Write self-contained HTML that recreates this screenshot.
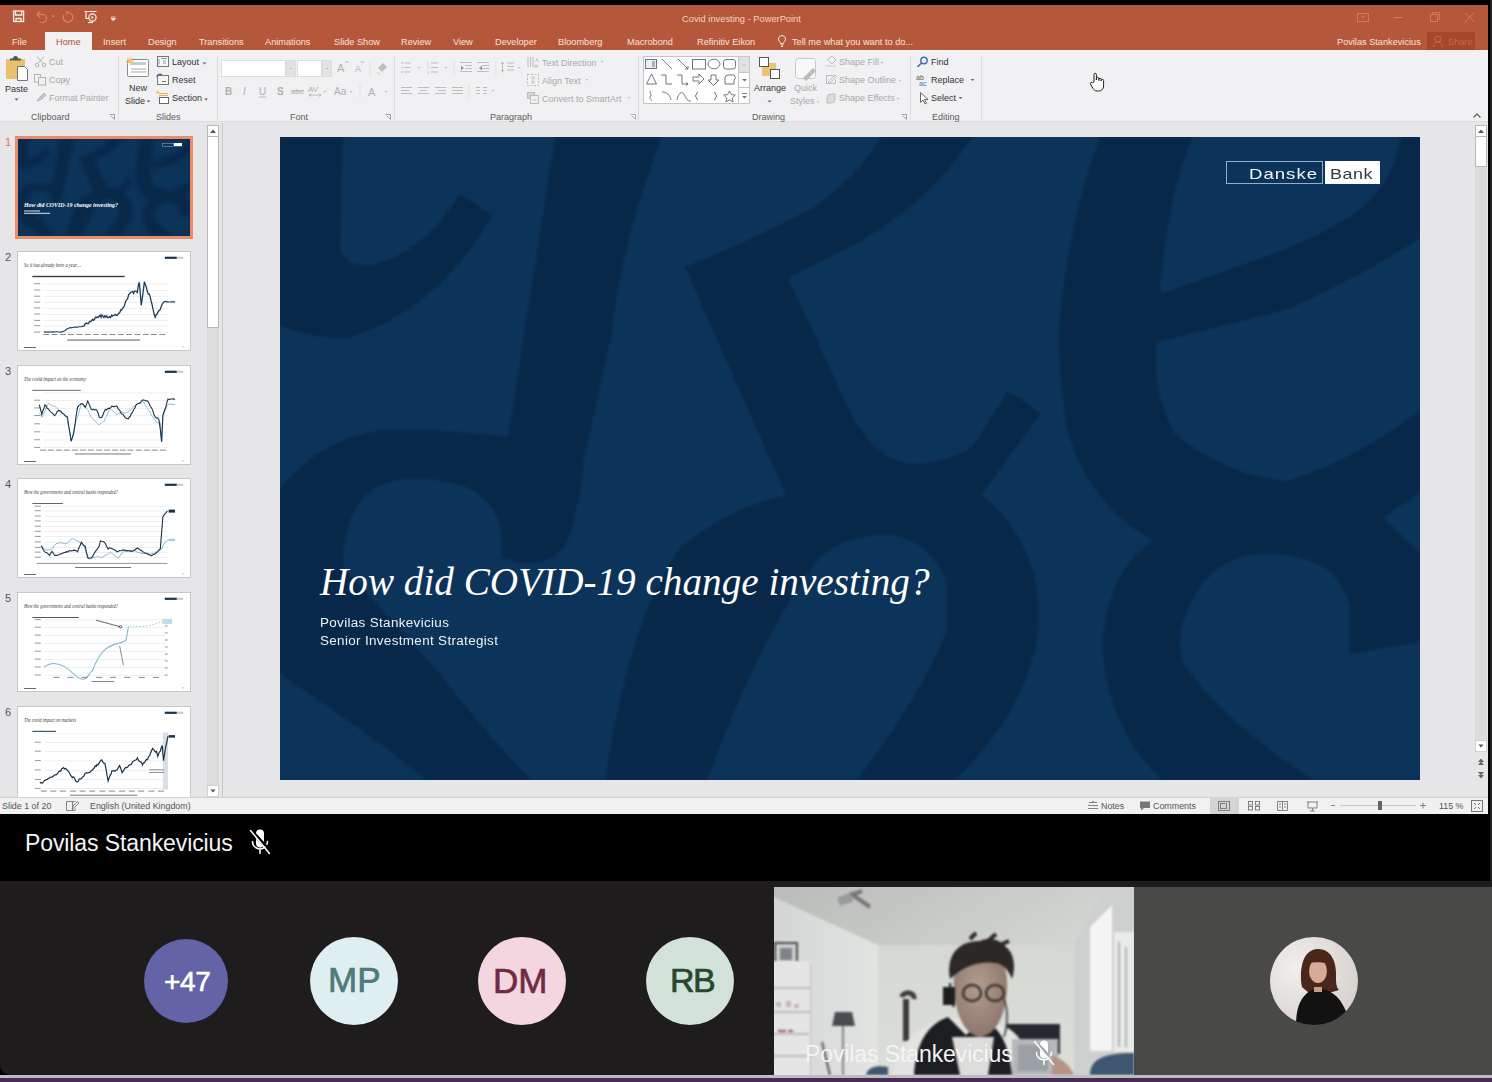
<!DOCTYPE html>
<html><head><meta charset="utf-8">
<style>
*{margin:0;padding:0;box-sizing:border-box}
html,body{width:1492px;height:1082px;overflow:hidden;background:#000;font-family:"Liberation Sans",sans-serif}
.a{position:absolute}
.t{position:absolute;white-space:nowrap;line-height:1}
#title{left:0;top:5px;width:1488px;height:45px;background:#b5573a}
#rstrip{left:1490px;top:0;width:2px;height:1082px;background:#1d1d1d}
.tab{position:absolute;top:38px;font-size:9.2px;color:#f9e4dc;white-space:nowrap;line-height:1}
#ribbon{left:0;top:50px;width:1488px;height:72px;background:#f1f0f2;border-bottom:1px solid #dddcdf}
.rb{position:absolute;font-size:9px;color:#3a3a3a;white-space:nowrap;line-height:1}
.g{color:#a9a9a9}
.grp{position:absolute;top:113px;font-size:9px;color:#5d5d5d;white-space:nowrap;line-height:1}
.sep{position:absolute;top:56px;width:1px;height:64px;background:#dcdcdc}
.dd{position:absolute;width:0;height:0;border-left:2.5px solid transparent;border-right:2.5px solid transparent;border-top:3px solid #777}
.ddg{border-top-color:#bbb}
#work{left:0;top:122px;width:1488px;height:675px;background:#e6e5e8}
#status{left:0;top:797px;width:1488px;height:17px;background:#f1f1f1;border-top:1px solid #d2d2d2}
.st{position:absolute;top:802px;font-size:8.9px;color:#555;white-space:nowrap;line-height:1}
#teamsname{left:0;top:814px;width:1488px;height:67px;background:#000}
#tiles{left:0;top:881px;width:1492px;height:194px;background:#1e1c1d;border-bottom-left-radius:10px}
.thumb{position:absolute;left:17px;width:174px;height:100px;background:#fff;border:1px solid #c8c8c8;overflow:hidden}
.num{position:absolute;left:5px;font-size:11px;color:#555;line-height:1}
</style></head><body>
<div class="a" id="title"></div>
<div class="a" id="rstrip"></div>
<!-- QAT -->
<svg class="a" style="left:0;top:5px" width="130" height="26" viewBox="0 5 130 26">
 <g fill="none" stroke="#fbeee8" stroke-width="1.3">
  <rect x="13.6" y="11" width="10" height="10.5"/>
  <path d="M15.5 11v4h6.2v-4" />
  <path d="M16 21.5v-3h5v3" />
 </g>
 <g fill="none" stroke="#d98a6f" stroke-width="1.2" opacity="0.9">
  <path d="M37 14.5l3-3M37 14.5l3 3M37 14.5h5.5a4 4 0 0 1 0 8h-2"/>
  <path d="M68 12.5a4.8 4.8 0 1 1 -4.2 2.5M68 12.5l-1.8 -1.5M68 12.5l-1.5 2"/>
 </g>
 <path d="M51.5 15.5h3.5l-1.75 2z" fill="#d98a6f"/>
 <g fill="none" stroke="#fbeee8" stroke-width="1.2">
  <path d="M84.5 11.5h12M86 11.5v7h3"/>
  <circle cx="92.5" cy="17.5" r="3.6"/>
  <path d="M91.5 15.8l2.2 1.7l-2.2 1.7z" fill="#fbeee8" stroke="none"/>
  <path d="M88 22.5h5" />
 </g>
 <path d="M111 17h4.5M111 18.5h4.5l-2.25 2.2z" fill="#fbeee8" stroke="#fbeee8" stroke-width="0.8"/>
</svg>
<div class="t" style="left:682px;top:15px;font-size:9.3px;color:#f4d3c6">Covid investing - PowerPoint</div>
<!-- window controls -->
<svg class="a" style="left:1350px;top:5px" width="138" height="26" viewBox="1350 5 138 26">
 <g fill="none" stroke="#cd7a60" stroke-width="1">
  <rect x="1357.5" y="13.5" width="11" height="8"/>
  <path d="M1363 19.5v-4M1361 17.5l2-2l2 2"/>
  <path d="M1394 17.5h9"/>
  <rect x="1430.5" y="14.5" width="7" height="7"/>
  <path d="M1432.5 14.5v-2h7v7h-2"/>
  <path d="M1465 12.5l9.5 9.5M1474.5 12.5l-9.5 9.5"/>
 </g>
</svg>
<!-- tabs -->
<div class="a" style="left:45px;top:32px;width:47px;height:19px;background:#f1f1f1"></div>
<div class="tab" style="left:12px">File</div>
<div class="tab" style="left:56px;color:#a8543e">Home</div>
<div class="tab" style="left:103px">Insert</div>
<div class="tab" style="left:148px">Design</div>
<div class="tab" style="left:199px">Transitions</div>
<div class="tab" style="left:265px">Animations</div>
<div class="tab" style="left:334px">Slide Show</div>
<div class="tab" style="left:401px">Review</div>
<div class="tab" style="left:453px">View</div>
<div class="tab" style="left:495px">Developer</div>
<div class="tab" style="left:558px">Bloomberg</div>
<div class="tab" style="left:627px">Macrobond</div>
<div class="tab" style="left:697px">Refinitiv Eikon</div>
<svg class="a" style="left:776px;top:34px" width="12" height="14" viewBox="0 0 12 14"><path d="M6 1.5a3.6 3.6 0 0 0-2.2 6.4c.5.5.7 1 .7 1.7h3c0-.7.2-1.2.7-1.7A3.6 3.6 0 0 0 6 1.5zM4.6 11h2.8M5 12.5h2" fill="none" stroke="#f9e4dc" stroke-width="1"/></svg>
<div class="tab" style="left:792px">Tell me what you want to do...</div>
<div class="tab" style="left:1337px">Povilas Stankevicius</div>
<div class="a" style="left:1427px;top:32px;width:48px;height:18px;background:#a4472a"></div>
<svg class="a" style="left:1431px;top:34px" width="14" height="14" viewBox="0 0 14 14"><path d="M7 2a3 3 0 1 1 0 6a3 3 0 1 1 0-6zM2 13c.5-3 2.5-5 5-5s4.5 2 5 5" fill="none" stroke="#c9664a" stroke-width="1"/></svg>
<div class="tab" style="left:1448px;color:#c9664a">Share</div>
<div class="a" id="ribbon"></div>
<!-- Clipboard -->
<svg class="a" style="left:0;top:50px" width="120" height="72" viewBox="0 50 120 72">
 <rect x="6" y="59" width="19" height="20" fill="#e8c06e"/>
 <path d="M10 60.5h11v-2h-3a2.5 2.5 0 0 0-5 0h-3z" fill="#555"/>
 <path d="M17.5 66.5h7l3 3v11h-10z" fill="#fff" stroke="#666" stroke-width="0.9"/>
 <path d="M14.5 98.5h4l-2 2.2z" fill="#666"/>
 <g fill="none" stroke="#b5b5b5" stroke-width="1">
  <circle cx="37" cy="65" r="1.8"/><circle cx="44" cy="65" r="1.8"/>
  <path d="M38 63.5l6-7M43 63.5l-6-7"/>
  <rect x="34.5" y="74.5" width="6" height="7.5"/><rect x="38.5" y="77.5" width="7" height="7.5" fill="#f1f1f1"/>
  <path d="M37 101l3-4l4-4l2 2l-4 4z" fill="#c8c8c8"/>
 </g>
 <path d="M62.5 80h4l-2 2z" fill="#c0c0c0"/>
 <path d="M109.5 114.5h5v5M111 116l3.5 3.5" fill="none" stroke="#999" stroke-width="0.9"/>
</svg>
<div class="rb" style="left:5px;top:85px;color:#333">Paste</div>
<div class="rb g" style="left:49px;top:58px">Cut</div>
<div class="rb g" style="left:49px;top:76px">Copy</div>
<div class="rb g" style="left:49px;top:94px">Format Painter</div>
<div class="grp" style="left:31px">Clipboard</div>
<div class="sep" style="left:118px"></div>
<!-- Slides -->
<svg class="a" style="left:120px;top:50px" width="100" height="72" viewBox="120 50 100 72">
 <rect x="127.5" y="59.5" width="21" height="17" fill="#fff" stroke="#8a8a8a" stroke-width="1" rx="1"/>
 <rect x="131" y="62" width="15" height="3" fill="#c9c9c9"/>
 <path d="M131 69h15M131 72h15" stroke="#aaa" stroke-width="1"/>
 <circle cx="130" cy="61" r="2.2" fill="#f2c75c"/>
 <path d="M130 56.5v9M125.5 61h9M127 58l6 6M133 58l-6 6" stroke="#f2c75c" stroke-width="0.8"/>
 <path d="M146.5 100.5h4l-2 2z" fill="#666"/>
 <rect x="157.5" y="56.5" width="11" height="10" fill="#f6f6f6" stroke="#777"/>
 <path d="M159 58.5v6M161 58.5h6M163 61h3M163 63h3" stroke="#999"/>
 <rect x="157.5" y="75.5" width="11" height="9" fill="#f6f6f6" stroke="#777"/>
 <path d="M157 77a3 3 0 0 1 5-2" stroke="#3a6ea5" stroke-width="1.4" fill="none"/>
 <path d="M162 81.5h4" stroke="#777"/>
 <rect x="159.5" y="97.5" width="9" height="6" fill="#fff" stroke="#666"/>
 <path d="M159 93.5h9M159 95.5h9" stroke="#e8b04a" stroke-width="1.2"/>
 <circle cx="157.5" cy="92.5" r="1.4" fill="#f2c75c"/>
 <path d="M202.5 62.5h4l-2 2z M204 98.5h4l-2 2z" fill="#666"/>
</svg>
<div class="rb" style="left:129px;top:84px;color:#333">New</div>
<div class="rb" style="left:125px;top:97px;color:#333">Slide</div>
<div class="rb" style="left:172px;top:58px;color:#333">Layout</div>
<div class="rb" style="left:172px;top:76px;color:#333">Reset</div>
<div class="rb" style="left:172px;top:94px;color:#333">Section</div>
<div class="grp" style="left:156px">Slides</div>
<div class="sep" style="left:217px"></div>
<!-- Font -->
<div class="a" style="left:221px;top:60px;width:65px;height:17px;background:#fff;border:1px solid #dcdcdc"></div>
<div class="a" style="left:286px;top:60px;width:10px;height:17px;background:#e3e3e3;border:1px solid #dcdcdc"></div>
<div class="a" style="left:297px;top:60px;width:25px;height:17px;background:#fff;border:1px solid #dcdcdc"></div>
<div class="a" style="left:322px;top:60px;width:10px;height:17px;background:#e3e3e3;border:1px solid #dcdcdc"></div>
<svg class="a" style="left:215px;top:50px" width="180" height="72" viewBox="215 50 180 72">
 <path d="M289.5 68h3l-1.5 1.5zM325.5 68h3l-1.5 1.5z" fill="#bbb"/>
 <g fill="#b0b0b0" font-family="Liberation Sans" >
  <text x="337" y="72" font-size="11">A</text>
  <text x="355" y="72" font-size="9">A</text>
  <text x="225" y="95" font-size="10" font-weight="bold">B</text>
  <text x="243" y="95" font-size="10" font-style="italic">I</text>
  <text x="259" y="95" font-size="10">U</text>
  <text x="277" y="95" font-size="10" font-weight="bold">S</text>
  <text x="291" y="94" font-size="8">abc</text>
  <text x="308" y="92" font-size="8">AV</text>
  <text x="334" y="95" font-size="10">Aa</text>
  <text x="368" y="96" font-size="11">A</text>
 </g>
 <path d="M345 63l2-2l1.5 2M361 61l1.5 2l2-2" stroke="#b0b0b0" fill="none" stroke-width="0.8"/>
 <path d="M259 97h7M291 91h13M309 95h12M309 95l2-1.5M309 95l2 1.5M321 95l-2-1.5M321 95l-2 1.5" stroke="#b0b0b0" stroke-width="0.8" fill="none"/>
 <path d="M323.5 91h3l-1.5 1.5zM349.5 91h3l-1.5 1.5zM384.5 91h3l-1.5 1.5z" fill="#c0c0c0"/>
 <path d="M370 62v14M360 84v14" stroke="#e0e0e0"/>
 <path d="M378 68l5-5l4 4l-5 5z" fill="#c0c0c0"/><path d="M377 72l3 3" stroke="#ccc"/>
 <path d="M385.5 114.5h5v5M387 116l3.5 3.5" fill="none" stroke="#999" stroke-width="0.9"/>
</svg>
<div class="grp" style="left:290px">Font</div>
<div class="sep" style="left:394px"></div>
<!-- Paragraph -->
<svg class="a" style="left:395px;top:50px" width="245" height="72" viewBox="395 50 245 72">
 <g stroke="#bdbdbd" stroke-width="1" fill="none">
  <path d="M404.5 63h6M404.5 67.5h6M404.5 72h6"/>
  <path d="M431 63h7M431 67.5h7M431 72h7"/>
  <path d="M460 62.5h12M465 65.5h7M465 68.5h7M460 71.5h12M477 62.5h12M482 65.5h7M482 68.5h7M477 71.5h12"/>
  <path d="M507 63h7M507 66.5h7M507 70h7"/>
  <path d="M502.5 62v10"/>
  <path d="M401 87.5h11M401 90.5h8M401 93.5h11M418 87.5h11M420 90.5h7M418 93.5h11M435 87.5h11M438 90.5h8M435 93.5h11M452 87.5h11M452 90.5h11M452 93.5h11"/>
  <path d="M476 87.5h4M476 90.5h4M476 93.5h4M483 87.5h4M483 90.5h4M483 93.5h4"/>
  <rect x="527.5" y="74.5" width="11" height="11" stroke-dasharray="2 1.5"/>
  <path d="M533 76.5v7M531 78.5l2-2l2 2M531 81.5l2 2l2-2"/>
  <rect x="527.5" y="92.5" width="7" height="6" fill="#d5d5d5"/><rect x="530.5" y="95.5" width="8" height="8" fill="#f1f0f2"/>
  <path d="M532.5 100h4"/>
  <path d="M528 57v10M530.5 57v10M533 57v10"/>
 </g>
 <g stroke="#e1e1e1" stroke-width="1"><path d="M454 61v14M496 61v14M469 84v14"/></g>
 <g fill="#bdbdbd">
  <rect x="401.5" y="62.3" width="1.5" height="1.5"/><rect x="401.5" y="66.8" width="1.5" height="1.5"/><rect x="401.5" y="71.3" width="1.5" height="1.5"/>
  <text x="427" y="64.5" font-size="3.5" font-family="Liberation Sans">1</text><text x="427" y="69" font-size="3.5" font-family="Liberation Sans">2</text><text x="427" y="73.5" font-size="3.5" font-family="Liberation Sans">3</text>
  <path d="M461 65.5l3 2.5l-3 2.5zM482 65.5l-3 2.5l3 2.5z" fill="#9a9a9a"/>
  <path d="M500.5 64l2-2.5l2 2.5zM500.5 70l2 2.5l2-2.5z"/>
  <path d="M417.5 67h3l-1.5 1.5zM444.5 67h3l-1.5 1.5zM517.5 67h3l-1.5 1.5zM491.5 90h3l-1.5 1.5zM600.5 61h3l-1.5 1.5zM585.5 79h3l-1.5 1.5zM627.5 97h3l-1.5 1.5z"/>
  <text x="535" y="62" font-size="6" font-family="Liberation Sans">A</text>
  <path d="M535 64v3M534 66l1 1.5l1-1.5M537 64v3M536 66l1 1.5l1-1.5" stroke="#bdbdbd" stroke-width="0.6"/>
 </g>
 <path d="M630.5 114.5h5v5M632 116l3.5 3.5" fill="none" stroke="#aaa" stroke-width="0.9"/>
</svg>
<div class="rb g" style="left:542px;top:59px">Text Direction</div>
<div class="rb g" style="left:542px;top:77px">Align Text</div>
<div class="rb g" style="left:542px;top:95px">Convert to SmartArt</div>
<div class="grp" style="left:490px">Paragraph</div>
<div class="sep" style="left:638px"></div>
<!-- Drawing -->
<div class="a" style="left:643px;top:56px;width:107px;height:48px;background:#fff;border:1px solid #c6c6c6"></div>
<div class="a" style="left:738px;top:56px;width:12px;height:17px;background:#e2e2e2;border:1px solid #c6c6c6"></div>
<div class="a" style="left:738px;top:72px;width:12px;height:16px;background:#fff;border:1px solid #c6c6c6"></div>
<div class="a" style="left:738px;top:87px;width:12px;height:17px;background:#fff;border:1px solid #c6c6c6"></div>
<svg class="a" style="left:640px;top:50px" width="275" height="72" viewBox="640 50 275 72">
 <g fill="none" stroke="#666" stroke-width="0.9">
  <rect x="645.5" y="59.5" width="11" height="9" fill="#e8eef6"/>
  <path d="M652 62h3M652 64h3M652 66h3"/>
  <path d="M662 59l10 10M678 59l10 10M688 69v-3M688 69h-3"/>
  <rect x="692.5" y="59.5" width="13" height="9.5"/>
  <ellipse cx="714" cy="64" rx="6" ry="4.8"/>
  <rect x="723.5" y="59.5" width="12" height="9.5" rx="2.5"/>
  <path d="M651.5 74l-5 10h10z"/>
  <path d="M661 75h5v9h6"/>
  <path d="M677 75h5v9h6M688 84l-2-1.5M688 84l-2 1.5"/>
  <path d="M693 77h6v-3l5 5l-5 5v-3h-6z"/>
  <path d="M711 75h5v5h3l-5.5 5.5l-5.5-5.5h3z"/>
  <path d="M725 84v-6a3 3 0 0 1 3-3h6a3 3 0 0 1 0 5v4z"/>
  <path d="M651 91c-3 2 2 3-1 6c-1 2 3 3 1 4"/>
  <path d="M662 92c5 0 8 3 9 8"/>
  <path d="M677 100c2-9 6-9 8-4c2 5 4 5 6 5"/>
  <path d="M698 92c-2 0-1 4-3 4c2 0 1 4 3 4M714 92c2 0 1 4 3 4c-2 0-1 4-3 4"/>
  <path d="M729.5 91l1.8 3.6l4 .5l-3 2.8l.8 4l-3.6-2l-3.6 2l.8-4l-3-2.8l4-.5z"/>
 </g>
 <path d="M742 66l2-2l2 2" fill="none" stroke="#c0c0c0"/>
 <path d="M742 79h5l-2.5 2.5z M742 96h5l-2.5 2.5z" fill="#777"/>
 <path d="M742 93.5h5" stroke="#777"/>
 <!-- arrange -->
 <rect x="762" y="63" width="14" height="13" fill="#e9c472"/>
 <rect x="759.5" y="57.5" width="9" height="9" fill="#fff" stroke="#555"/>
 <rect x="770.5" y="69.5" width="9" height="9" fill="#fff" stroke="#555"/>
 <path d="M767.5 100.5h4l-2 2z" fill="#666"/>
 <!-- quick styles -->
 <rect x="795.5" y="58.5" width="20" height="20" rx="3" fill="#f8f8f8" stroke="#c8c8c8"/>
 <path d="M803 78l10-10l3 3l-10 10z" fill="#bcbcbc"/>
 <path d="M816.5 101.5h3l-1.5 1.5z" fill="#c0c0c0"/>
 <g fill="none" stroke="#bdbdbd" stroke-width="1">
  <path d="M828 59l4-3l4 4l-4 4l-4-4z"/><path d="M826 66h10" stroke="#ddd" stroke-width="2"/>
  <path d="M826.5 75.5h7M826.5 75.5v8h9v-4M828 82l7-7l1.5 1.5l-7 7z"/>
  <path d="M827 98a4 4 0 0 1 4-4h4v5a4 4 0 0 1-4 4h-4z" fill="#ddd"/>
 </g>
 <path d="M880.5 62h3l-1.5 1.5zM898.5 80h3l-1.5 1.5zM896.5 98h3l-1.5 1.5z" fill="#c0c0c0"/>
 <path d="M901.5 114.5h5v5M903 116l3.5 3.5" fill="none" stroke="#999" stroke-width="0.9"/>
</svg>
<div class="rb" style="left:754px;top:84px;color:#333">Arrange</div>
<div class="rb g" style="left:794px;top:84px">Quick</div>
<div class="rb g" style="left:790px;top:97px">Styles</div>
<div class="rb g" style="left:839px;top:58px">Shape Fill</div>
<div class="rb g" style="left:839px;top:76px">Shape Outline</div>
<div class="rb g" style="left:839px;top:94px">Shape Effects</div>
<div class="grp" style="left:752px">Drawing</div>
<div class="sep" style="left:910px"></div>
<!-- Editing -->
<svg class="a" style="left:912px;top:50px" width="70" height="72" viewBox="912 50 70 72">
 <circle cx="924" cy="60.5" r="3.2" fill="none" stroke="#3b6fb0" stroke-width="1.4"/>
 <path d="M921.5 63l-4 4" stroke="#3b6fb0" stroke-width="1.6"/>
 <text x="916" y="80" font-size="7" font-family="Liberation Sans" fill="#555">ab</text>
 <text x="919" y="86" font-size="7" font-family="Liberation Sans" fill="#3b6fb0">ac</text>
 <path d="M920.5 92.5v10l2.5-2.5l2 4l1.5-.8l-2-3.8h3.5z" fill="#fff" stroke="#444" stroke-width="0.8"/>
 <path d="M970.5 79h4l-2 2zM958.5 97h4l-2 2z" fill="#666"/>
</svg>
<div class="rb" style="left:931px;top:58px;color:#333">Find</div>
<div class="rb" style="left:931px;top:76px;color:#333">Replace</div>
<div class="rb" style="left:931px;top:94px;color:#333">Select</div>
<div class="grp" style="left:932px">Editing</div>
<div class="sep" style="left:981px"></div>
<svg class="a" style="left:1470px;top:110px" width="14" height="10" viewBox="0 0 14 10"><path d="M3.5 7.5l3.5-3.5l3.5 3.5" fill="none" stroke="#666" stroke-width="1.3"/></svg>
<!-- cursor hand -->
<svg class="a" style="left:1089px;top:72px" width="16" height="20" viewBox="0 0 16 20"><path d="M5 10V2.5a1.2 1.2 0 0 1 2.4 0V8V6.5a1.2 1.2 0 0 1 2.4 0V8.5V7.5a1.2 1.2 0 0 1 2.4 0V9V8.5a1.2 1.2 0 0 1 2.4 0V14c0 3-2 5-5 5H8c-2 0-3-1-4-2.5L1.5 12a1.2 1.2 0 0 1 2-1.3z" fill="#fff" stroke="#222" stroke-width="1"/></svg>
<div class="a" id="work"></div>
<svg width="0" height="0" style="position:absolute">
 <defs>
  <symbol id="pat" viewBox="0 0 1140 643" preserveAspectRatio="none">
   <rect width="1140" height="643" fill="#0c3359"/>
   <g fill="#08284a">
    <path d="M0,0 L63,0 L60,112 Q66,130 90,128 Q140,120 180,57 L212,78 Q160,172 70,200 Q30,203 0,188 Z"/>
    <path d="M275,0 L382,0 Q345,90 331,200 L304,323 Q296,395 282,412 Q262,434 222,421 L228,300 Z"/>
    <path d="M0,351 Q50,293 116,293 Q180,293 228,300 L240,430 L250,643 L147,643 Q80,590 0,537 Z"/>
    <path d="M601,0 L692,0 Q650,65 577,106 L508,141 L566,266 Q592,325 635,327 Q670,325 693,309 L728,254 L761,276 L701,358 Q755,400 759,473 Q760,560 675,643 L577,643 Q640,560 666,496 L666,440 Q640,395 600,398 Q555,400 533,429 Q480,500 427,643 L325,643 Q350,480 400,411 Q450,370 506,358 L405,130 Q475,102 533,71 Q580,38 601,0 Z"/>
    <path d="M820,0 L1140,0 L1140,643 L882,643 Q826,590 822,505 Q830,430 874,404 Q810,370 786,290 Q775,200 781,170 Q790,80 820,0 Z"/>
   </g>
   <g fill="#0c3359">
    <path d="M63,430 L63,420 Q68,342 133,342 Q215,340 222,400 L222,421 Q262,434 290,425 L350,450 L320,643 L251,643 Q200,590 160,537 L63,430 Z"/>
    <path d="M912,0 L1121,0 Q1112,48 1080,72 Q1040,102 970,125 Q925,142 880,157 Q885,70 912,0 Z"/>
    <path d="M877,205 Q940,190 1008,172 Q1080,140 1140,101 L1140,273 Q1079,321 1008,344 Q948,340 895,297 Q870,250 877,205 Z"/>
    <path d="M1140,356 L1103,380 L1140,416 Z"/>
    <path d="M907,475 Q930,416 990,416 Q1060,420 1070,470 L1070,517 L1140,505 L1140,643 L1034,643 Q950,590 904,528 Q895,500 907,475 Z"/>
   </g>
  </symbol>
 </defs>
</svg>
<!-- main slide -->
<svg class="a" style="left:280px;top:137px" width="1140" height="643"><defs><filter id="mb" color-interpolation-filters="sRGB" x="-2%" y="-2%" width="104%" height="104%"><feGaussianBlur stdDeviation="1.1"/></filter></defs><g filter="url(#mb)"><rect x="-10" y="-10" width="1160" height="663" fill="#0b2f53"/><use href="#pat" width="1140" height="643"/></g></svg>
<div class="a" style="left:1226px;top:161px;width:97px;height:23px;border:1px solid #8fb0cf"></div>
<div class="t" style="left:1249px;top:166px;font-size:15px;color:#f4f7fa;letter-spacing:0.8px;transform:scaleX(1.24);transform-origin:0 0">Danske</div>
<div class="a" style="left:1325px;top:161px;width:55px;height:23px;background:#fff"></div>
<div class="t" style="left:1330px;top:166px;font-size:15px;color:#2d3a47;letter-spacing:0.4px;transform:scaleX(1.2);transform-origin:0 0">Bank</div>
<div class="t" style="left:320px;top:562px;font-family:'Liberation Serif',serif;font-style:italic;font-size:39.2px;color:#fff">How did COVID-19 change investing?</div>
<div class="t" style="left:320px;top:617px;font-size:12px;color:#eef2f6;letter-spacing:0.3px;transform:scaleX(1.12);transform-origin:0 0">Povilas Stankevicius</div>
<div class="t" style="left:320px;top:635px;font-size:12px;color:#eef2f6;letter-spacing:0.3px;transform:scaleX(1.12);transform-origin:0 0">Senior Investment Strategist</div>
<!-- left panel -->
<div class="a" style="left:222px;top:123px;width:1px;height:674px;background:#c9c9c9"></div>
<div class="a" style="left:207px;top:125px;width:12px;height:672px;background:#dcdcdc"></div>
<div class="a" style="left:207px;top:125px;width:12px;height:12px;background:#fff;border:1px solid #b9b9b9"></div>
<div class="a" style="left:207px;top:136px;width:12px;height:192px;background:#fff;border:1px solid #b9b9b9"></div>
<div class="a" style="left:207px;top:785px;width:12px;height:12px;background:#fff;border:1px solid #d0d0d0"></div>
<svg class="a" style="left:207px;top:125px" width="12" height="12"><path d="M3 8h6l-3-3.5z" fill="#555"/></svg>
<svg class="a" style="left:207px;top:785px" width="12" height="12"><path d="M3.5 4.5h5l-2.5 3z" fill="#555"/></svg>
<!-- right scrollbar -->
<div class="a" style="left:1475px;top:125px;width:12px;height:672px;background:#dcdcdc"></div>
<div class="a" style="left:1475px;top:125px;width:12px;height:12px;background:#fff;border:1px solid #b9b9b9"></div>
<div class="a" style="left:1475px;top:136px;width:12px;height:31px;background:#fff;border:1px solid #b9b9b9"></div>
<div class="a" style="left:1475px;top:740px;width:12px;height:12px;background:#fff;border:1px solid #d0d0d0"></div>
<div class="a" style="left:1475px;top:752px;width:12px;height:45px;background:#e6e6e7"></div>
<svg class="a" style="left:1475px;top:125px" width="12" height="12"><path d="M3 8h6l-3-3.5z" fill="#555"/></svg>
<svg class="a" style="left:1475px;top:740px" width="12" height="12"><path d="M3.5 4.5h5l-2.5 3z" fill="#555"/></svg>
<svg class="a" style="left:1475px;top:752px" width="12" height="30"><path d="M3 10h6l-3-3.5zM3 13h6l-3-3.5z M3 20h6l-3 3.5zM3 23h6l-3 3.5z" fill="#666"/></svg>
<!-- thumbnails -->
<div class="num" style="top:137px;color:#d9744f">1</div>
<div class="a" style="left:15px;top:136px;width:178px;height:103px;background:#ea8c69"></div>
<div class="a" style="left:18px;top:139px;width:172px;height:97px;overflow:hidden">
<svg style="position:absolute;left:-8px;top:-8px" width="188" height="113"><defs><filter id="tb" color-interpolation-filters="sRGB"><feGaussianBlur stdDeviation="2"/></filter></defs>
 <g filter="url(#tb)"><rect width="188" height="113" fill="#0b2f53"/><use href="#pat" x="8" y="8" width="172" height="97"/></g>
 <g transform="translate(8,8)">
 <rect x="144.5" y="4.5" width="11" height="3" fill="none" stroke="#9fb3c9" stroke-width="0.5"/><rect x="156" y="4" width="8" height="3.2" fill="#fff"/>
 <text x="6" y="68" font-family="Liberation Serif" font-style="italic" font-weight="bold" font-size="5.9" fill="#fff">How did COVID-19 change investing?</text>
 <rect x="6" y="71.5" width="16" height="1" fill="#dfe6ee"/><rect x="6" y="73.8" width="26" height="1" fill="#dfe6ee"/>
 </g>
</svg></div>
<div class="num" style="top:252px">2</div>
<div class="thumb" style="top:251px"><svg width="174" height="99" viewBox="0 0 174 99"><rect x="146.8" y="4.7" width="12" height="2.2" fill="#1d3447"/><rect x="158.9" y="4.7" width="6.4" height="2.2" fill="#c5ced8"/><text x="6" y="15" font-family="Liberation Serif" font-style="italic" font-size="5.2" fill="#3a3a3a" textLength="57" lengthAdjust="spacingAndGlyphs">So it has already been a year…</text><rect x="6" y="95" width="12" height="0.8" fill="#444"/><rect x="164.5" y="94.5" width="1" height="0.8" fill="#777"/><rect x="14.3" y="23.8" width="92.4" height="1.4" fill="#3d3d3d"/><rect x="26" y="31.7" width="124" height="0.6" fill="#e4e4e4"/><rect x="26" y="38.0" width="124" height="0.6" fill="#e4e4e4"/><rect x="26" y="44.2" width="124" height="0.6" fill="#e4e4e4"/><rect x="26" y="50.1" width="124" height="0.6" fill="#e4e4e4"/><rect x="26" y="55.9" width="124" height="0.6" fill="#e4e4e4"/><rect x="26" y="62.0" width="124" height="0.6" fill="#e4e4e4"/><rect x="26" y="68.4" width="124" height="0.6" fill="#e4e4e4"/><rect x="26" y="73.7" width="124" height="0.6" fill="#e4e4e4"/><rect x="26" y="80.1" width="124" height="0.6" fill="#e4e4e4"/><rect x="16.2" y="31.2" width="6" height="1" fill="#9a9a9a"/><rect x="16.2" y="37.5" width="6" height="1" fill="#9a9a9a"/><rect x="16.2" y="43.7" width="6" height="1" fill="#9a9a9a"/><rect x="16.2" y="49.6" width="6" height="1" fill="#9a9a9a"/><rect x="16.2" y="55.4" width="6" height="1" fill="#9a9a9a"/><rect x="16.2" y="61.5" width="6" height="1" fill="#9a9a9a"/><rect x="16.2" y="67.9" width="6" height="1" fill="#9a9a9a"/><rect x="16.2" y="73.2" width="6" height="1" fill="#9a9a9a"/><rect x="16.2" y="79.6" width="6" height="1" fill="#9a9a9a"/><polyline fill="none" stroke="#1f3e58" stroke-width="1.1" points="25.8,80.0 27.0,79.9 28.2,80.2 29.5,79.8 30.7,80.1 31.9,80.0 33.1,79.8 34.4,80.1 35.6,79.8 36.8,80.0 38.1,79.8 39.3,79.8 40.5,80.0 41.8,80.3 43.0,79.9 44.2,79.9 45.5,79.3 46.8,78.7 48.1,77.7 49.3,76.8 50.6,76.3 51.9,75.6 53.1,75.9 54.4,75.5 55.7,75.2 57.0,75.1 58.2,75.1 59.5,75.2 60.8,74.7 62.1,74.8 63.3,74.7 64.6,74.4 65.9,74.3"/><polyline fill="none" stroke="#1f3e58" stroke-width="1.3" points="65.9,74.5 66.9,72.2 67.9,71.4 68.9,71.1 70.0,71.9 71.0,70.3 71.9,69.3 72.8,69.5 73.8,68.5 74.7,67.3 75.6,68.3 76.5,67.3 77.5,65.2 78.4,65.7 79.3,64.9 80.2,65.4 81.2,64.3 82.1,63.1 83.1,65.5 84.0,63.0 85.0,64.2 85.9,65.5 86.9,63.8 87.9,65.2 88.8,64.0 89.8,65.6 90.7,65.6 91.7,64.7 92.6,65.4 93.6,63.2 94.5,64.1 95.5,63.5 96.5,63.1 97.4,62.4 98.4,63.3 99.3,63.3 100.3,61.5 101.6,60.9 102.8,57.7 103.8,58.0 104.7,56.0 105.7,55.4 106.6,53.1 107.7,49.3 108.7,47.6 109.7,46.5 110.7,42.4 111.7,41.7 112.7,40.5 113.7,40.0 114.6,39.5 115.6,41.4 116.5,39.1 117.5,39.1 118.4,39.3 119.4,40.5 120.3,33.5 121.3,30.2 122.3,41.4 123.2,53.3 124.3,45.9 125.3,38.8 126.4,29.7 127.4,32.7 128.3,35.0 129.3,39.3 130.2,42.1 131.2,42.0 132.1,44.6 133.1,48.9 134.2,53.0 135.2,57.9 136.2,62.3 137.2,65.3 138.2,62.6 139.1,62.0 140.1,59.9 141.0,58.6 142.0,58.0 143.0,55.2 143.9,52.7 144.9,51.2 146.1,49.5"/><polyline fill="none" stroke="#1f3e58" stroke-width="1.2" points="146.1,49.6 147.3,49.3 148.5,49.9 149.7,49.9 151.0,50.0 152.2,50.0 153.4,49.9 154.6,49.9 155.8,49.8 157.0,50.1"/><rect x="25.3" y="82.0" width="6" height="1" fill="#8a8a8a"/><rect x="33.6" y="82.0" width="6" height="1" fill="#8a8a8a"/><rect x="41.9" y="82.0" width="6" height="1" fill="#8a8a8a"/><rect x="50.1" y="82.0" width="6" height="1" fill="#8a8a8a"/><rect x="58.4" y="82.0" width="6" height="1" fill="#8a8a8a"/><rect x="66.7" y="82.0" width="6" height="1" fill="#8a8a8a"/><rect x="75.0" y="82.0" width="6" height="1" fill="#8a8a8a"/><rect x="83.3" y="82.0" width="6" height="1" fill="#8a8a8a"/><rect x="91.5" y="82.0" width="6" height="1" fill="#8a8a8a"/><rect x="99.8" y="82.0" width="6" height="1" fill="#8a8a8a"/><rect x="108.1" y="82.0" width="6" height="1" fill="#8a8a8a"/><rect x="116.4" y="82.0" width="6" height="1" fill="#8a8a8a"/><rect x="124.7" y="82.0" width="6" height="1" fill="#8a8a8a"/><rect x="132.9" y="82.0" width="6" height="1" fill="#8a8a8a"/><rect x="141.2" y="82.0" width="6" height="1" fill="#8a8a8a"/><rect x="49.3" y="87.5" width="72.6" height="1.1" fill="#6a6a6a"/></svg></div>
<div class="num" style="top:366px">3</div>
<div class="thumb" style="top:365px"><svg width="174" height="99" viewBox="0 0 174 99"><rect x="146.8" y="4.7" width="12" height="2.2" fill="#1d3447"/><rect x="158.9" y="4.7" width="6.4" height="2.2" fill="#c5ced8"/><text x="6" y="15" font-family="Liberation Serif" font-style="italic" font-size="5.2" fill="#3a3a3a" textLength="62" lengthAdjust="spacingAndGlyphs">The covid impact on the economy</text><rect x="6" y="95" width="12" height="0.8" fill="#444"/><rect x="164.5" y="94.5" width="1" height="0.8" fill="#777"/><rect x="14.3" y="23.8" width="48.4" height="1.1" fill="#777"/><rect x="26" y="26.6" width="124" height="0.6" fill="#e4e4e4"/><rect x="26" y="34.2" width="124" height="0.6" fill="#e4e4e4"/><rect x="26" y="41.9" width="124" height="0.6" fill="#e4e4e4"/><rect x="26" y="49.5" width="124" height="0.6" fill="#e4e4e4"/><rect x="26" y="57.8" width="124" height="0.6" fill="#e4e4e4"/><rect x="26" y="65.8" width="124" height="0.6" fill="#e4e4e4"/><rect x="26" y="73.7" width="124" height="0.6" fill="#e4e4e4"/><rect x="26" y="81.4" width="124" height="0.6" fill="#e4e4e4"/><rect x="16.2" y="33.7" width="6" height="1" fill="#9a9a9a"/><rect x="16.2" y="41.4" width="6" height="1" fill="#9a9a9a"/><rect x="16.2" y="49.0" width="6" height="1" fill="#9a9a9a"/><rect x="16.2" y="57.3" width="6" height="1" fill="#9a9a9a"/><rect x="16.2" y="65.3" width="6" height="1" fill="#9a9a9a"/><rect x="16.2" y="73.2" width="6" height="1" fill="#9a9a9a"/><rect x="16.2" y="80.9" width="6" height="1" fill="#9a9a9a"/><polyline fill="none" stroke="#86b9cf" stroke-width="0.9" points="21.3,47.2 22.6,48.8 23.8,51.4 24.9,49.2 26.0,46.8 27.0,44.8 28.1,42.0 29.2,39.6 30.2,37.5 31.3,37.8 32.3,38.7 33.4,38.6 34.5,40.3 35.5,40.3 36.6,40.0 37.6,41.0 38.7,42.0 39.8,42.9 40.8,43.4 41.9,45.4 43.0,46.5 44.0,46.7 45.1,47.8 46.1,48.2 47.2,49.3 48.3,50.7 49.3,51.7 50.6,60.6 51.9,67.6 53.1,75.5 54.2,72.6 55.2,67.6 56.2,62.7 57.2,59.0 58.2,53.8 59.3,51.3 60.3,48.7 61.3,45.2 62.3,41.7 63.3,37.7 64.4,38.6 65.4,39.0 66.4,40.8 67.4,41.1 68.4,42.3 69.5,43.4 70.5,45.0 71.5,47.7 72.5,49.8 73.5,51.3 74.6,52.5 75.7,53.8 76.8,55.0 77.9,55.4 79.0,57.2 80.1,58.2 81.2,58.9 82.2,57.9 83.2,57.3 84.2,56.3 85.2,55.9 86.3,55.3 87.3,52.2 88.3,50.7 89.3,48.5 90.3,46.2 91.4,42.9 92.5,43.4 93.5,44.2 94.6,44.8 95.7,45.6 96.8,47.0 97.9,48.1 99.0,48.8 100.0,47.7 101.0,47.5 102.1,47.2 103.1,45.5 104.1,45.9 105.1,46.6 106.1,46.6 107.2,46.8 108.2,46.7 109.2,46.4 110.3,46.3 111.4,44.5 112.5,44.2 113.6,43.3 114.7,41.3 115.7,40.2 116.8,40.0 118.0,39.2 119.1,37.8 120.2,37.3 121.3,36.8 122.4,37.6 123.5,36.9 124.6,35.4 125.8,36.0 126.8,38.2 127.9,39.6 128.9,41.0 130.0,43.2 131.1,44.5 132.1,46.2 133.2,49.2 134.3,50.2 135.3,51.5 136.4,53.6 137.4,54.3 138.5,56.5 139.8,56.8 141.0,56.3 142.3,56.7 143.6,75.9 144.9,50.4 145.9,48.4 146.9,45.3 147.9,43.0 148.9,40.0 150.0,38.7 151.0,37.8 152.0,38.0 153.0,38.2 154.0,38.7 155.0,37.9 156.0,38.7 157.0,38.0"/><polyline fill="none" stroke="#1b3347" stroke-width="1.1" points="21.3,38.7 22.6,43.5 23.8,48.3 24.9,44.5 26.0,42.2 27.0,38.8 28.1,39.8 29.2,42.3 30.2,42.6 31.3,44.2 32.3,45.6 33.4,46.4 34.5,47.1 35.5,48.5 36.6,49.6 37.9,48.3 39.1,45.5 40.4,44.5 41.7,44.6 43.0,45.3 44.0,47.0 45.1,47.4 46.1,48.3 47.2,49.5 48.3,50.6 49.3,50.7 50.6,59.0 51.9,66.9 53.1,75.0 54.4,71.5 55.7,67.3 57.0,58.5 58.2,49.5 59.5,41.3 60.8,39.6 62.1,38.6 63.3,37.5 64.6,37.7 65.9,39.4 67.2,41.3 68.4,38.6 69.7,34.9 71.0,37.9 72.3,41.3 73.5,43.7 74.5,43.7 75.6,43.2 76.6,43.9 77.6,43.8 78.6,43.8 79.9,46.4 81.2,51.1 82.4,51.7 83.7,51.5 85.0,48.8 86.3,45.2 87.4,43.4 88.5,44.0 89.5,42.6 90.6,42.2 91.7,42.5 92.8,41.7 93.9,40.0 94.9,40.5 95.9,40.6 97.0,40.3 98.0,40.1 99.0,40.3 100.3,43.1 101.6,44.1 102.8,47.0 103.9,47.9 105.0,48.3 106.0,49.9 107.1,51.4 108.1,52.3 109.2,52.6 110.2,52.8 111.2,51.2 112.3,50.3 113.3,47.6 114.3,46.6 115.6,43.7 116.8,42.3 118.1,38.9 119.2,37.9 120.3,37.5 121.4,37.5 122.5,36.5 123.6,34.8 124.7,33.8 125.8,34.3 127.0,34.3 128.3,35.2 129.6,34.8 130.9,36.9 132.1,40.0 133.4,41.7 134.7,44.1 135.9,48.5 137.2,51.0 138.5,52.1 139.8,51.8 141.0,53.9 142.3,63.5 143.6,75.6 144.9,49.4 145.9,46.1 146.9,43.2 147.9,40.6 148.9,36.4 150.0,33.0 151.0,33.6 152.0,33.2 153.0,33.0 154.0,33.0 155.0,32.9 156.0,33.1 157.0,33.6"/><rect x="22.1" y="83.6" width="6" height="1" fill="#8a8a8a"/><rect x="29.8" y="83.6" width="6" height="1" fill="#8a8a8a"/><rect x="38.0" y="83.6" width="6" height="1" fill="#8a8a8a"/><rect x="45.7" y="83.6" width="6" height="1" fill="#8a8a8a"/><rect x="54.0" y="83.6" width="6" height="1" fill="#8a8a8a"/><rect x="61.9" y="83.6" width="6" height="1" fill="#8a8a8a"/><rect x="69.9" y="83.6" width="6" height="1" fill="#8a8a8a"/><rect x="78.2" y="83.6" width="6" height="1" fill="#8a8a8a"/><rect x="86.1" y="83.6" width="6" height="1" fill="#8a8a8a"/><rect x="94.1" y="83.6" width="6" height="1" fill="#8a8a8a"/><rect x="101.7" y="83.6" width="6" height="1" fill="#8a8a8a"/><rect x="109.4" y="83.6" width="6" height="1" fill="#8a8a8a"/><rect x="117.7" y="83.6" width="6" height="1" fill="#8a8a8a"/><rect x="125.9" y="83.6" width="6" height="1" fill="#8a8a8a"/><rect x="133.6" y="83.6" width="6" height="1" fill="#8a8a8a"/><rect x="141.9" y="83.6" width="6" height="1" fill="#8a8a8a"/><rect x="57.0" y="87.5" width="56.1" height="1" fill="#777"/></svg></div>
<div class="num" style="top:479px">4</div>
<div class="thumb" style="top:478px"><svg width="174" height="99" viewBox="0 0 174 99"><rect x="146.8" y="4.7" width="12" height="2.2" fill="#1d3447"/><rect x="158.9" y="4.7" width="6.4" height="2.2" fill="#c5ced8"/><text x="6" y="15" font-family="Liberation Serif" font-style="italic" font-size="5.2" fill="#3a3a3a" textLength="94" lengthAdjust="spacingAndGlyphs">How the governments and central banks responded?</text><rect x="6" y="95" width="12" height="0.8" fill="#444"/><rect x="164.5" y="94.5" width="1" height="0.8" fill="#777"/><rect x="14.3" y="24.0" width="30.6" height="1" fill="#666"/><rect x="27" y="27.2" width="123" height="0.6" fill="#e4e4e4"/><rect x="27" y="31.7" width="123" height="0.6" fill="#e4e4e4"/><rect x="27" y="37.0" width="123" height="0.6" fill="#e4e4e4"/><rect x="27" y="41.9" width="123" height="0.6" fill="#e4e4e4"/><rect x="27" y="47.2" width="123" height="0.6" fill="#e4e4e4"/><rect x="27" y="52.3" width="123" height="0.6" fill="#e4e4e4"/><rect x="27" y="57.4" width="123" height="0.6" fill="#e4e4e4"/><rect x="27" y="62.9" width="123" height="0.6" fill="#e4e4e4"/><rect x="27" y="68.4" width="123" height="0.6" fill="#e4e4e4"/><rect x="27" y="73.1" width="123" height="0.6" fill="#e4e4e4"/><rect x="27" y="78.2" width="123" height="0.6" fill="#e4e4e4"/><rect x="16.8" y="26.7" width="6" height="1" fill="#9a9a9a"/><rect x="16.8" y="31.2" width="6" height="1" fill="#9a9a9a"/><rect x="16.8" y="36.5" width="6" height="1" fill="#9a9a9a"/><rect x="16.8" y="41.4" width="6" height="1" fill="#9a9a9a"/><rect x="16.8" y="46.7" width="6" height="1" fill="#9a9a9a"/><rect x="16.8" y="51.8" width="6" height="1" fill="#9a9a9a"/><rect x="16.8" y="56.9" width="6" height="1" fill="#9a9a9a"/><rect x="16.8" y="62.4" width="6" height="1" fill="#9a9a9a"/><rect x="16.8" y="67.9" width="6" height="1" fill="#9a9a9a"/><rect x="16.8" y="72.6" width="6" height="1" fill="#9a9a9a"/><rect x="16.8" y="77.7" width="6" height="1" fill="#9a9a9a"/><polyline fill="none" stroke="#86b9cf" stroke-width="1" points="23.2,66.5 24.3,67.6 25.4,69.2 26.6,69.8 27.7,71.2 28.7,70.8 29.7,71.0 30.7,70.7 31.7,70.9 32.8,70.7 33.8,70.1 34.8,68.7 35.8,67.0 36.8,66.0 37.9,65.2 38.9,64.1 39.9,64.6 40.9,64.0 41.9,63.8 43.0,63.9 44.0,63.7 45.0,64.0 46.0,64.5 47.0,65.0 48.1,64.6 49.1,64.3 50.2,63.3 51.2,62.4 52.3,61.3 53.4,60.4 54.4,59.2 55.5,59.9 56.6,60.4 57.7,61.6 58.8,61.6 59.9,62.1 61.0,62.6 62.1,63.9 63.3,65.2 64.6,66.2 65.9,67.1 66.9,69.6 67.9,72.2 68.9,74.9 70.0,77.2 71.0,80.0 72.1,79.5 73.2,79.8 74.3,79.5 75.3,78.7 76.4,78.0 77.5,78.4 78.6,77.3 79.6,77.6 80.7,77.5 81.7,78.2 82.7,78.5 83.7,78.8 84.8,77.9 85.9,77.5 87.1,76.4 88.2,76.0 89.3,75.2 90.4,74.9 91.5,73.9 92.6,73.2 93.7,74.2 94.8,74.9 95.9,76.0 97.0,76.6 98.1,77.6 99.2,78.2 100.3,79.0 101.3,77.9 102.3,76.1 103.3,74.8 104.4,74.2 105.4,72.1 106.5,72.5 107.6,72.3 108.7,71.5 109.8,72.1 110.9,72.0 112.1,71.6 113.2,71.6 114.3,71.5 115.4,71.2 116.5,71.9 117.6,72.3 118.7,73.0 119.8,73.3 120.8,73.7 121.9,73.8 123.0,74.4 124.1,74.4 125.2,74.7 126.3,74.5 127.4,74.6 128.5,75.0 129.6,75.5 130.7,74.9 131.8,75.4 132.9,74.9 133.9,74.7 135.0,74.4 136.1,74.2 137.2,73.7 138.3,72.6 139.3,72.7 140.4,72.0 141.5,71.2 142.5,70.6 143.6,70.0 144.9,66.9 146.1,65.0 147.4,63.3 148.7,61.8 150.0,60.7 151.0,61.2 152.0,60.7 153.0,61.2 154.0,61.4 155.0,61.0 156.0,60.9 157.0,61.0"/><polyline fill="none" stroke="#1b3347" stroke-width="1.1" points="23.2,66.7 24.3,68.8 25.3,70.8 26.4,72.6 27.4,73.3 28.4,73.5 29.5,74.4 30.5,75.2 31.5,76.5 32.8,74.1 34.0,72.5 35.3,74.2 36.6,76.5 37.6,76.3 38.7,76.4 39.8,76.1 40.8,75.8 41.9,75.1 43.0,75.0 44.0,74.5 45.1,74.1 46.1,73.3 47.2,73.7 48.3,72.6 49.3,72.9 50.4,72.7 51.4,71.5 52.5,71.8 53.6,71.9 54.6,71.8 55.7,71.1 57.0,71.4 58.2,71.7 59.5,72.9 60.8,69.2 62.1,66.6 63.3,63.2 64.6,64.8 65.9,66.5 67.2,67.0 68.4,73.4 69.7,78.8 71.0,79.2 72.3,79.0 73.5,78.5 74.6,77.6 75.7,75.5 76.8,73.4 77.9,71.8 79.0,70.6 80.1,68.9 81.2,67.1 82.4,61.9 83.7,62.3 85.0,62.5 86.3,63.2 87.5,64.7 88.8,67.8 90.1,70.2 91.4,68.9 92.6,69.0 93.7,69.5 94.8,70.3 95.8,70.3 96.9,71.0 97.9,71.7 99.0,72.9 100.1,72.3 101.2,71.9 102.3,71.8 103.4,71.5 104.5,71.1 105.6,70.9 106.6,71.5 107.7,71.1 108.8,72.0 109.9,71.5 111.0,71.7 112.1,72.1 113.2,71.9 114.3,72.3 115.3,72.1 116.3,71.3 117.4,70.5 118.4,69.5 119.4,69.0 120.4,69.8 121.4,70.2 122.4,71.1 123.5,71.2 124.5,72.7 125.5,72.9 126.5,73.7 127.5,74.1 128.6,74.3 129.6,74.5 130.9,76.0 132.1,75.9 133.4,76.9 134.4,76.1 135.4,75.4 136.5,75.2 137.5,74.8 138.5,73.5 139.8,72.6 141.0,71.0 142.3,69.9 143.6,53.9 144.9,37.7 146.0,36.1 147.1,34.6 148.2,33.7 149.3,31.7"/><rect x="150.6" y="30.6" width="6.4" height="3" fill="#1b3347"/><rect x="150.6" y="59.7" width="6.4" height="2.5" fill="#a9cedd"/><rect x="18.8" y="83.9" width="130.6" height="0.9" fill="#8a8a8a"/><rect x="57.0" y="88.0" width="56.1" height="1" fill="#777"/></svg></div>
<div class="num" style="top:593px">5</div>
<div class="thumb" style="top:592px"><svg width="174" height="99" viewBox="0 0 174 99"><rect x="146.8" y="4.7" width="12" height="2.2" fill="#1d3447"/><rect x="158.9" y="4.7" width="6.4" height="2.2" fill="#c5ced8"/><text x="6" y="15" font-family="Liberation Serif" font-style="italic" font-size="5.2" fill="#3a3a3a" textLength="94" lengthAdjust="spacingAndGlyphs">How the governments and central banks responded?</text><rect x="6" y="95" width="12" height="0.8" fill="#444"/><rect x="164.5" y="94.5" width="1" height="0.8" fill="#777"/><rect x="14.3" y="24.0" width="46.5" height="1" fill="#555"/><rect x="27" y="26.6" width="121" height="0.6" fill="#e4e4e4"/><rect x="27" y="34.2" width="121" height="0.6" fill="#e4e4e4"/><rect x="27" y="42.1" width="121" height="0.6" fill="#e4e4e4"/><rect x="27" y="50.1" width="121" height="0.6" fill="#e4e4e4"/><rect x="27" y="58.2" width="121" height="0.6" fill="#e4e4e4"/><rect x="27" y="66.1" width="121" height="0.6" fill="#e4e4e4"/><rect x="27" y="74.0" width="121" height="0.6" fill="#e4e4e4"/><rect x="27" y="82.0" width="121" height="0.6" fill="#e4e4e4"/><rect x="16.8" y="26.1" width="6" height="1" fill="#9a9a9a"/><rect x="16.8" y="33.7" width="6" height="1" fill="#9a9a9a"/><rect x="16.8" y="41.6" width="6" height="1" fill="#9a9a9a"/><rect x="16.8" y="49.6" width="6" height="1" fill="#9a9a9a"/><rect x="16.8" y="57.7" width="6" height="1" fill="#9a9a9a"/><rect x="16.8" y="65.6" width="6" height="1" fill="#9a9a9a"/><rect x="16.8" y="73.5" width="6" height="1" fill="#9a9a9a"/><rect x="16.8" y="81.5" width="6" height="1" fill="#9a9a9a"/><rect x="146.8" y="32.4" width="3" height="1" fill="#9a9a9a"/><rect x="146.8" y="39.4" width="3" height="1" fill="#9a9a9a"/><rect x="146.8" y="46.5" width="3" height="1" fill="#9a9a9a"/><rect x="146.8" y="53.5" width="3" height="1" fill="#9a9a9a"/><rect x="146.8" y="60.5" width="3" height="1" fill="#9a9a9a"/><rect x="146.8" y="67.5" width="3" height="1" fill="#9a9a9a"/><rect x="146.8" y="74.5" width="3" height="1" fill="#9a9a9a"/><rect x="146.8" y="81.5" width="3" height="1" fill="#9a9a9a"/><path d="M25.8 74.3 C32.8 68.6 43.0 68.6 56.3 81.4 S71.0 77.5 74.2 78.2 C81.2 59.7 88.8 52.1 101.6 50.1 L107.9 47.6 L110.5 33.6" fill="none" stroke="#86b9cf" stroke-width="1.1"/><polyline fill="none" stroke="#86b9cf" stroke-width="0.8" stroke-dasharray="1.5 1.8" points="111.7,32.9 118.1,33.3 124.5,33.6 133.4,32.3 142.3,29.1"/><rect x="144.2" y="25.9" width="10" height="5" fill="#bddbe8"/><path d="M78.0 27.2L101.6 33.6" stroke="#222" stroke-width="0.7"/><circle cx="102.6" cy="33.8" r="1.2" fill="none" stroke="#222" stroke-width="0.7"/><path d="M101.6 52.7L105.4 72.4" stroke="#444" stroke-width="0.6"/><rect x="35.5" y="83.9" width="6" height="1" fill="#8a8a8a"/><rect x="49.5" y="83.9" width="6" height="1" fill="#8a8a8a"/><rect x="63.5" y="83.9" width="6" height="1" fill="#8a8a8a"/><rect x="78.2" y="83.9" width="6" height="1" fill="#8a8a8a"/><rect x="92.2" y="83.9" width="6" height="1" fill="#8a8a8a"/><rect x="106.2" y="83.9" width="6" height="1" fill="#8a8a8a"/><rect x="120.8" y="83.9" width="6" height="1" fill="#8a8a8a"/><rect x="134.9" y="83.9" width="6" height="1" fill="#8a8a8a"/><rect x="73.5" y="88.0" width="22.9" height="1" fill="#888"/></svg></div>
<div class="num" style="top:707px">6</div>
<div class="thumb" style="top:706px;height:92px;border-bottom:none"><svg width="174" height="92" viewBox="0 0 174 92"><rect x="146.8" y="4.7" width="12" height="2.2" fill="#1d3447"/><rect x="158.9" y="4.7" width="6.4" height="2.2" fill="#c5ced8"/><text x="6" y="15" font-family="Liberation Serif" font-style="italic" font-size="5.2" fill="#3a3a3a" textLength="52" lengthAdjust="spacingAndGlyphs">The covid impact on markets</text><rect x="14.3" y="23.8" width="23.6" height="1.2" fill="#3a5670"/><rect x="27" y="26.6" width="121" height="0.6" fill="#e4e4e4"/><rect x="27" y="35.2" width="121" height="0.6" fill="#e4e4e4"/><rect x="27" y="44.2" width="121" height="0.6" fill="#e4e4e4"/><rect x="27" y="53.6" width="121" height="0.6" fill="#e4e4e4"/><rect x="27" y="62.9" width="121" height="0.6" fill="#e4e4e4"/><rect x="27" y="72.4" width="121" height="0.6" fill="#e4e4e4"/><rect x="27" y="81.4" width="121" height="0.6" fill="#e4e4e4"/><rect x="16.8" y="34.7" width="6" height="1" fill="#9a9a9a"/><rect x="16.8" y="43.7" width="6" height="1" fill="#9a9a9a"/><rect x="16.8" y="53.1" width="6" height="1" fill="#9a9a9a"/><rect x="16.8" y="62.4" width="6" height="1" fill="#9a9a9a"/><rect x="16.8" y="71.9" width="6" height="1" fill="#9a9a9a"/><rect x="16.8" y="80.9" width="6" height="1" fill="#9a9a9a"/><rect x="144.9" y="25.3" width="5.1" height="57.3" fill="#d9dee9"/><polyline fill="none" stroke="#1b3347" stroke-width="1.2" points="21.9,76.2 22.9,75.3 23.8,76.2 24.7,76.0 25.6,74.5 26.5,73.4 27.5,73.1 28.4,72.5 29.3,72.5 30.2,71.6 31.2,71.1 32.1,70.4 33.1,70.2 34.0,70.0 35.1,69.4 36.1,68.3 37.1,67.9 38.1,67.8 39.1,67.1 40.0,66.0 41.0,64.5 41.9,63.9 42.8,64.3 43.7,61.6 44.6,61.3 45.5,60.6 46.5,61.9 47.5,61.5 48.6,62.5 49.6,63.4 50.6,64.6 51.6,66.0 52.5,68.2 53.5,69.3 54.4,70.6 55.4,69.9 56.5,71.0 57.5,73.4 58.5,74.8 59.5,74.9 60.4,74.2 61.3,72.0 62.2,71.8 63.2,71.8 64.1,70.6 65.0,69.7 65.9,68.9 66.8,66.9 67.8,66.1 68.8,65.6 69.7,65.8 70.7,65.6 71.6,65.5 72.6,64.5 73.5,63.8 74.5,63.1 75.4,61.6 76.3,60.8 77.2,58.9 78.2,59.4 79.1,57.4 80.0,57.9 80.9,56.4 81.9,54.8 82.8,53.5 83.7,52.8 84.8,54.9 85.8,56.3 86.9,56.4 88.0,61.8 89.0,68.2 90.1,73.9 91.0,71.3 92.0,68.7 93.0,67.2 93.9,63.8 94.9,63.9 95.9,63.7 97.0,64.2 98.0,63.0 99.0,63.0 100.3,60.6 101.6,58.5 102.8,61.4 104.1,65.7 105.4,63.9 106.6,61.9 107.6,60.5 108.6,60.6 109.5,60.2 110.5,58.9 111.4,57.8 112.4,57.8 113.3,57.5 114.3,55.3 115.3,54.0 116.3,53.8 117.4,53.0 118.4,52.7 119.4,50.8 120.4,53.2 121.4,54.2 122.4,54.9 123.5,55.4 124.5,58.1 125.5,55.8 126.5,55.7 127.5,53.6 128.6,52.5 129.6,52.6 130.6,49.6 131.6,48.9 132.6,45.9 133.7,43.3 134.7,41.3 135.6,42.5 136.6,43.8 137.5,45.1 138.5,44.3 139.8,49.3 141.0,45.7 142.3,44.1 143.3,40.5 144.2,38.4 145.5,53.7 146.5,47.4 147.4,41.4 148.7,35.6 150.0,29.1"/><rect x="150.6" y="28.1" width="6.4" height="2.5" fill="#1b3347"/><rect x="130.9" y="62.5" width="15.3" height="0.7" fill="#666"/><rect x="130.9" y="65.0" width="15.3" height="0.7" fill="#666"/><rect x="22.8" y="83.6" width="6" height="1" fill="#8a8a8a"/><rect x="32.3" y="83.6" width="6" height="1" fill="#8a8a8a"/><rect x="41.9" y="83.6" width="6" height="1" fill="#8a8a8a"/><rect x="52.1" y="83.6" width="6" height="1" fill="#8a8a8a"/><rect x="61.6" y="83.6" width="6" height="1" fill="#8a8a8a"/><rect x="71.2" y="83.6" width="6" height="1" fill="#8a8a8a"/><rect x="81.4" y="83.6" width="6" height="1" fill="#8a8a8a"/><rect x="90.9" y="83.6" width="6" height="1" fill="#8a8a8a"/><rect x="101.1" y="83.6" width="6" height="1" fill="#8a8a8a"/><rect x="110.7" y="83.6" width="6" height="1" fill="#8a8a8a"/><rect x="120.2" y="83.6" width="6" height="1" fill="#8a8a8a"/><rect x="130.4" y="83.6" width="6" height="1" fill="#8a8a8a"/><rect x="140.0" y="83.6" width="6" height="1" fill="#8a8a8a"/><rect x="51.9" y="87.7" width="67.5" height="1" fill="#777"/></svg></div>
<!-- status bar -->
<div class="a" id="status"></div>
<div class="st" style="left:2px">Slide 1 of 20</div>
<svg class="a" style="left:65px;top:800px" width="14" height="12" viewBox="0 0 14 12"><path d="M1.5 1.5h6v9h-6zM7.5 1.5h3M10 8.5v2h-3" fill="none" stroke="#777" stroke-width="0.9"/><path d="M7 9l1-3l4.5-4.5l1.5 1.5l-4.5 4.5z" fill="none" stroke="#777" stroke-width="0.9"/></svg>
<div class="st" style="left:90px">English (United Kingdom)</div>
<svg class="a" style="left:1086px;top:800px" width="14" height="12" viewBox="0 0 14 12"><path d="M3 2.5h8M2 5.5h10M2 8.5h10" stroke="#777" stroke-width="0.9"/><path d="M5 3l2-2.2l2 2.2" fill="#777"/></svg>
<div class="st" style="left:1101px">Notes</div>
<svg class="a" style="left:1139px;top:800px" width="12" height="12" viewBox="0 0 12 12"><path d="M1 1.5h10v6.5h-6l-3 2.5v-2.5h-1z" fill="#777"/></svg>
<div class="st" style="left:1153px">Comments</div>
<div class="a" style="left:1210px;top:798px;width:29px;height:16px;background:#d4d4d4"></div>
<svg class="a" style="left:1210px;top:798px" width="260" height="16" viewBox="1210 798 260 16">
 <g fill="none" stroke="#777" stroke-width="0.9">
  <rect x="1218.5" y="801.5" width="11" height="9"/><rect x="1220.5" y="803.5" width="6" height="5"/>
  <rect x="1248.5" y="801.5" width="4" height="3.5"/><rect x="1255.5" y="801.5" width="4" height="3.5"/><rect x="1248.5" y="806.5" width="4" height="3.5"/><rect x="1255.5" y="806.5" width="4" height="3.5"/>
  <path d="M1277.5 801.5h5v9h-5zM1282.5 801.5h5v9h-5M1279 804h2M1279 807h2M1284 804h2M1284 807h2"/>
  <path d="M1307 802h11M1308 802v6h9v-6M1312.5 808v3M1310 811h5"/>
  <path d="M1331 805.5h4M1420 805.5h6M1423 802.5v6"/>
 </g>
 <path d="M1340 805.5h76" stroke="#c6c6c6" stroke-width="1"/>
 <rect x="1378" y="801" width="4" height="9" fill="#666"/>
 <rect x="1471.5" y="800.5" width="11" height="11" fill="none" stroke="#777" stroke-width="0.9"/>
</svg>
<div class="st" style="left:1439px">115 %</div>
<svg class="a" style="left:1471px;top:800px" width="12" height="12" viewBox="0 0 12 12"><rect x="0.5" y="0.5" width="11" height="11" fill="none" stroke="#777"/><path d="M3 3l2 2M9 3l-2 2M3 9l2-2M9 9l-2-2" stroke="#777"/></svg>
<!-- teams -->
<div class="a" id="teamsname"></div>
<div class="t" style="left:25px;top:832px;font-size:23px;color:#f4f4f4;letter-spacing:-0.1px">Povilas Stankevicius</div>
<svg class="a" style="left:246px;top:827px" width="28" height="30" viewBox="0 0 28 30">
 <path d="M10 6.5a4 4 0 0 1 8 0v8.5l-8-8.8z M10 11.5l7 7.8a4 4 0 0 1-7-2.8z" fill="#fff"/>
 <g fill="none" stroke="#fff" stroke-width="1.5" stroke-linecap="round">
  <path d="M6.5 14.5a7.5 7.5 0 0 0 12.5 5.5M21.5 14.5a7.5 7.5 0 0 1-.6 2.8M14 22.5v4"/>
  <path d="M4.5 3.5l19 23"/>
 </g>
</svg>
<div class="a" id="tiles"></div>
<div class="a" style="left:0;top:1075px;width:1492px;height:3px;background:#bdbbbd"></div>
<div class="a" style="left:0;top:1078px;width:1492px;height:4px;background:#472b58"></div>
<!-- avatars -->
<div class="a" style="left:144px;top:939px;width:84px;height:84px;border-radius:50%;background:#6264a7"></div>
<div class="t" style="left:164px;top:968px;font-size:28px;color:#fff;letter-spacing:-0.3px;-webkit-text-stroke:0.6px #fff">+47</div>
<div class="a" style="left:310px;top:937px;width:88px;height:88px;border-radius:50%;background:#deeef1"></div>
<div class="t" style="left:328px;top:962px;font-size:35px;color:#4c7b79;-webkit-text-stroke:0.7px #4c7b79">MP</div>
<div class="a" style="left:478px;top:937px;width:88px;height:88px;border-radius:50%;background:#f3d6df"></div>
<div class="t" style="left:493px;top:963px;font-size:35px;color:#6e2c44;-webkit-text-stroke:0.7px #6e2c44">DM</div>
<div class="a" style="left:646px;top:937px;width:88px;height:88px;border-radius:50%;background:#d3e2d8"></div>
<div class="t" style="left:670px;top:963px;font-size:34px;color:#27472f;letter-spacing:-1.5px;-webkit-text-stroke:0.7px #27472f">RB</div>
<!-- right gray tile -->
<div class="a" style="left:1134px;top:887px;width:358px;height:188px;background:#494948"></div>
<svg class="a" style="left:1270px;top:937px" width="88" height="88" viewBox="0 0 88 88">
 <defs><clipPath id="cc"><circle cx="44" cy="44" r="44"/></clipPath>
 <radialGradient id="bgw" cx="0.3" cy="0.35" r="0.8"><stop offset="0" stop-color="#f1eeeb"/><stop offset="1" stop-color="#d6d0cc"/></radialGradient>
 <filter id="bl2" color-interpolation-filters="sRGB"><feGaussianBlur stdDeviation="0.6"/></filter></defs>
 <g clip-path="url(#cc)" filter="url(#bl2)">
  <rect width="88" height="88" fill="url(#bgw)"/>
  <path d="M32 50c-3-16 0-38 16-38c15 0 19 16 18 30c0 6 1 9 3 11l-10 3l-20 0z" fill="#4a261c"/>
  <ellipse cx="48" cy="34" rx="9" ry="12" fill="#d6ab96"/>
  <path d="M38 26c2-8 8-10 14-9c6 2 8 6 8 10c-8-2-15-2-22-1z" fill="#4a261c"/>
  <path d="M26 88c0-16 4-28 14-34l8-3l8 2c12 4 20 16 24 35z" fill="#121212"/>
  <path d="M44 50h8v5h-8z" fill="#c99c86"/>
 </g>
</svg>
<!-- video tile -->
<svg class="a" style="left:774px;top:887px" width="360" height="188" viewBox="0 0 360 188">
 <defs>
  <linearGradient id="ceil" x1="0" y1="0" x2="1" y2="0.3"><stop offset="0" stop-color="#b9bbb8"/><stop offset="1" stop-color="#d3d5d2"/></linearGradient>
  <linearGradient id="wallL" x1="0" y1="0" x2="1" y2="0"><stop offset="0" stop-color="#d3d5d4"/><stop offset="1" stop-color="#e2e4e2"/></linearGradient>
  <linearGradient id="wallB" x1="0" y1="0" x2="0" y2="1"><stop offset="0" stop-color="#d6d8d4"/><stop offset="1" stop-color="#dcdeda"/></linearGradient>
  <radialGradient id="face" cx="0.45" cy="0.4" r="0.6"><stop offset="0" stop-color="#b39c90"/><stop offset="1" stop-color="#8d766b"/></radialGradient>
  <filter id="bl" color-interpolation-filters="sRGB" x="-5%" y="-5%" width="110%" height="110%"><feGaussianBlur stdDeviation="1.1"/></filter>
 </defs>
 <g filter="url(#bl)">
 <rect x="-5" y="-5" width="370" height="198" fill="#d6d8d4"/>
 <path d="M-5 -5h370v64h-370z" fill="url(#ceil)"/>
 <path d="M-5 8L104 58V193H-5Z" fill="url(#wallL)"/>
 <path d="M104 58H300V193H104Z" fill="url(#wallB)"/>
 <path d="M300 58L335 -5H365V193H300Z" fill="#cdd0ce"/>
 <path d="M316 40l22-22v146h-22z" fill="#f3f4f3"/>
 <path d="M340 45h20v120h-20z" fill="#e9ebea"/>
 <path d="M345 55v105M352 60v100" stroke="#9aa0a4" stroke-width="1.5"/>
 <rect x="1" y="56" width="22" height="22" fill="#cfcfcf" stroke="#4a4a4a" stroke-width="2"/>
 <rect x="6" y="61" width="12" height="12" fill="#7f8387"/>
 <path d="M-5 74h44v119h-44z" fill="#e4e5e4"/>
 <path d="M-5 101h42M-5 125h42M-5 147h40M-5 169h40" stroke="#b9bbba" stroke-width="2"/>
 <path d="M37 76v112" stroke="#c9cbca" stroke-width="2"/>
 <path d="M2 120h5v-5h-5zM12 120h5v-6h-5zM20 121h5v-4h-5z" fill="#c2b8b6"/>
 <path d="M4 145h8v-2h-8zM14 145h5v-2h-5z" fill="#9b5550"/>
 <path d="M58 139h23l-3-14h-17z" fill="#4a4d50"/><path d="M69 139v49" stroke="#666" stroke-width="1.5"/>
 <path d="M48 155l8 33" stroke="#555" stroke-width="2"/>
 <path d="M132 112v42" stroke="#3c3c3c" stroke-width="6"/>
 <path d="M128 110a6 5 0 0 1 12 2" stroke="#3c3c3c" stroke-width="5" fill="none"/>
 <path d="M66 12l22-8M76 6l20 14" stroke="#777" stroke-width="4" fill="none"/>
 <rect x="64" y="8" width="14" height="9" fill="#9a9c9b" transform="rotate(-20 71 12)"/>
 <rect x="232" y="137" width="54" height="30" fill="#262a2e"/>
 <path d="M316 188c0-14 10-22 44-22v22z" fill="#3f5670"/>
 <path d="M92 188c2-8 10-10 22-8v8z" fill="#3f5670"/>
 <path d="M118 188c4-28 22-44 40-52l20-6l28 2l26 8c16 8 24 28 26 48z" fill="#e3e4e2"/>
 <path d="M140 188c2-30 12-50 34-58l18 18l16-14c20 4 28 30 30 54z" fill="#1c1e21"/>
 <path d="M178 150l8 38h28l6-38z" fill="#dcdcda"/>
 <path d="M180 100c-2-22 6-34 26-34c20 0 28 12 27 34c-1 26-10 48-27 50c-16-2-25-24-26-50z" fill="url(#face)"/>
 <path d="M176 92c-4-24 8-38 30-38c8-4 20-2 26 6c8 6 10 20 6 32c-4-10-10-16-18-16c-12-2-30 2-44 16z" fill="#2c2825"/>
 <path d="M196 52l6-6M214 54l8-7M226 58l9-4" stroke="#2c2825" stroke-width="4"/>
 <path d="M189 106a9 8 0 0 1 18 0a9 8 0 0 1-18 0zM212 106a9 8 0 0 1 18 0a9 8 0 0 1-18 0z" fill="none" stroke="#3a3430" stroke-width="2.4"/>
 <path d="M169 100h12v18h-12z" fill="#1d1d1d" rx="3"/>
 <path d="M176 96c0 10 2 20 4 24" stroke="#222" stroke-width="2" fill="none"/>
 <path d="M230 112c4 10 4 26 0 38" stroke="#333" stroke-width="1.5" fill="none"/>
 <path d="M238 152h46v36h-46z" fill="#b5b8ba"/>
 <path d="M244 158h30v26h-30z" fill="#9ba0a4"/>
 <path d="M278 168c12 4 20 14 22 20h-22z" fill="#b49585"/>
 </g>
</svg>
<div class="t" style="left:805px;top:1043px;font-size:23px;color:#f4f4f4;letter-spacing:-0.1px">Povilas Stankevicius</div>
<svg class="a" style="left:1030px;top:1038px" width="28" height="30" viewBox="0 0 28 30">
 <path d="M10 6.5a4 4 0 0 1 8 0v8.5l-8-8.8z M10 11.5l7 7.8a4 4 0 0 1-7-2.8z" fill="#fff"/>
 <g fill="none" stroke="#fff" stroke-width="1.5" stroke-linecap="round">
  <path d="M6.5 14.5a7.5 7.5 0 0 0 12.5 5.5M21.5 14.5a7.5 7.5 0 0 1-.6 2.8M14 22.5v4"/>
  <path d="M4.5 3.5l19 23"/>
 </g>
</svg>
</body></html>
